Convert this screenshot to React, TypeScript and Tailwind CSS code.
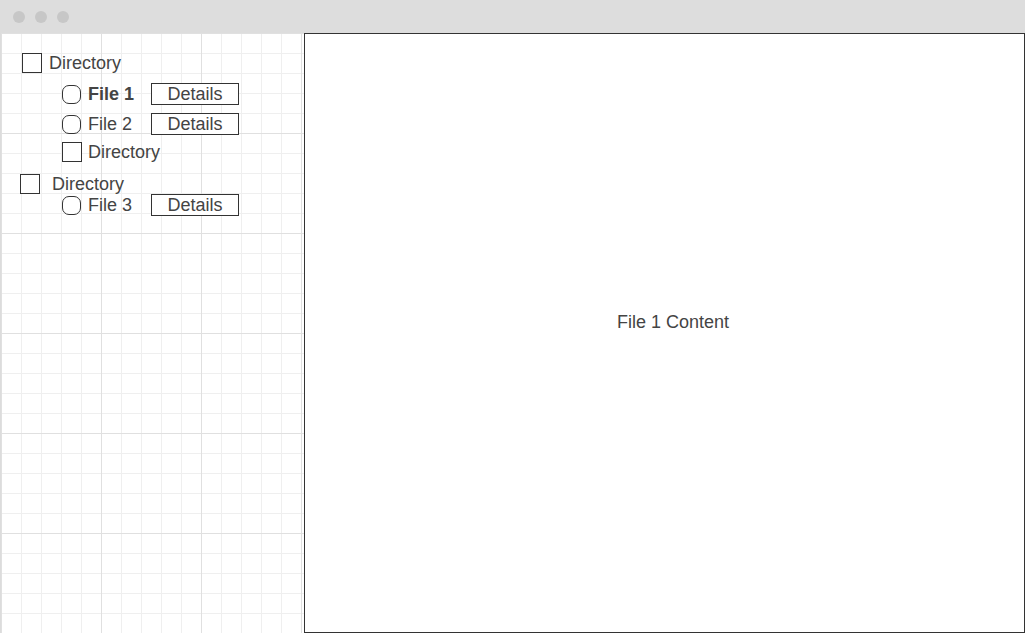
import React from "react";

const font = { fontFamily: '"Liberation Sans", Arial, sans-serif' };

function Check({ x = "ml-[21px]" }: { x?: string }) {
  return <div className={`${x} h-[20px] w-[20px] shrink-0 border border-[#333] bg-white`} />;
}

function Radio() {
  return <div className="ml-[61px] h-[19px] w-[19px] shrink-0 rounded-[7px] border border-[#333] bg-white" />;
}

function FileRow({ label, bold, mt }: { label: string; bold?: boolean; mt: string }) {
  return (
    <div className={`${mt} flex h-[22px] items-center`}>
      <Radio />
      <span className={`ml-[7px] w-[63px] text-[18px] leading-[21px] text-[#444] ${bold ? "font-bold" : ""}`}>{label}</span>
      <div className="flex h-[22px] w-[88px] items-center justify-center border border-[#333] bg-white text-[18px] leading-[19px] text-[#444]">
        Details
      </div>
    </div>
  );
}

export default function App() {
  return (
    <div className="flex h-[633px] w-[1025px] flex-col overflow-hidden bg-white" style={font}>
      <div className="flex h-[33px] shrink-0 items-center gap-[10px] bg-[#dddddd] pl-[13px]">
        <div className="h-[12px] w-[12px] rounded-full bg-[#c7c7c7]" />
        <div className="h-[12px] w-[12px] rounded-full bg-[#c7c7c7]" />
        <div className="h-[12px] w-[12px] rounded-full bg-[#c7c7c7]" />
      </div>
      <div className="flex flex-1">
        <div className="w-[304px] shrink-0 border-l border-[#dcdcdc] pt-[20px] [background-image:linear-gradient(to_right,#e0e0e0_1px,transparent_1px),linear-gradient(to_bottom,#e0e0e0_1px,transparent_1px),linear-gradient(to_right,#efefef_1px,transparent_1px),linear-gradient(to_bottom,#efefef_1px,transparent_1px)] [background-size:100px_100px,100px_100px,20px_20px,20px_20px]">
          <div className="flex h-[20px] items-center">
            <Check />
            <span className="ml-[7px] text-[18px] leading-[22px] text-[#444]">Directory</span>
          </div>
          <FileRow label="File 1" bold mt="mt-[10px]" />
          <FileRow label="File 2" mt="mt-[8px]" />
          <div className="mt-[7px] flex h-[20px] items-center">
            <Check x="ml-[61px]" />
            <span className="ml-[6px] text-[18px] leading-[22px] text-[#444]">Directory</span>
          </div>
          <div className="mt-[12px] flex h-[20px] items-center">
            <Check x="ml-[19px]" />
            <span className="ml-[12px] text-[18px] leading-[20px] text-[#444]">Directory</span>
          </div>
          <FileRow label="File 3" mt="mt-0" />
        </div>
        <div className="flex flex-1 items-center justify-center border border-[#333] bg-white pb-[22px] pl-[17px]">
          <span className="text-[18px] text-[#444]">File 1 Content</span>
        </div>
      </div>
    </div>
  );
}
